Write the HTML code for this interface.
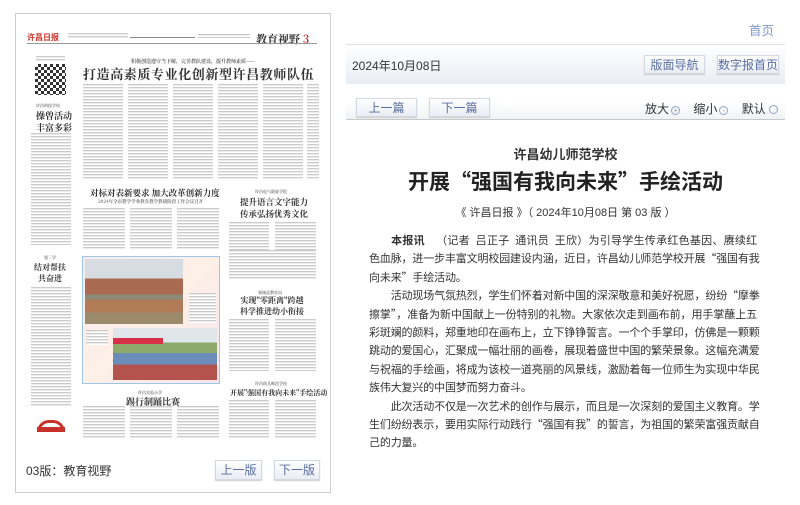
<!DOCTYPE html>
<html><head><meta charset="utf-8"><style>
*{margin:0;padding:0;box-sizing:border-box}
body{width:800px;height:505px;background:#fff;position:relative;overflow:hidden;font-family:"Liberation Sans","Noto Sans CJK SC",sans-serif;color:#333}
.a{position:absolute}
.t{background:repeating-linear-gradient(to bottom,#cbcbcb 0 1px,#ececec 1px 2px,#fff 2px 3px)}
.btn{position:absolute;border:1px solid #d3d8e2;background:linear-gradient(#fff,#e9edf4);box-shadow:0 1px 1px #ccc;font-size:12px;color:#5a6fa0;text-align:center;line-height:18px}
.np{font-family:"Noto Serif CJK SC","Noto Sans CJK SC",serif;font-weight:bold;color:#333;white-space:nowrap}
.ln{height:18.4px;line-height:18.4px;font-size:11px;letter-spacing:-0.15px;text-align:justify;text-align-last:justify;white-space:nowrap;color:#333;font-family:"Noto Sans CJK SC","Liberation Sans",sans-serif}
.ln.l{text-align-last:left}
</style></head><body>
<div class="a" style="left:15px;top:13px;width:316px;height:480px;border:1px solid #cfcfcf"></div>
<div class="a" style="left:27px;top:32px;font-size:8px;color:#c8312a;font-weight:bold">许昌日报</div>
<div class="a t" style="left:68px;top:33px;width:60px;height:6px"></div>
<div class="a" style="left:130px;top:37px;width:65px;height:1px;background:#888"></div>
<div class="a t" style="left:198px;top:34px;width:52px;height:4px"></div>
<div class="a np" style="left:256px;top:31px;font-size:11px">教育视野 <span style="color:#c8312a">3</span></div>
<div class="a" style="left:27px;top:43px;width:290px;height:1px;background:#999"></div>
<div class="a t" style="left:36px;top:56px;width:29px;height:5px"></div>
<div class="a" style="left:35px;top:64px;width:31px;height:31px;background:repeating-conic-gradient(#333 0 25%,#fff 0 50%) 0 0/6px 6px"></div>
<div class="a np" style="left:36px;top:103px;font-size:4px;color:#777">许昌科技学校</div>
<div class="a np" style="left:36px;top:110px;font-size:9px;line-height:12px">操曾活动<br>丰富多彩</div>
<div class="a t" style="left:31px;top:133px;width:40px;height:112px"></div>
<div class="a np" style="left:44px;top:255px;font-size:4px;color:#777">第三学</div>
<div class="a np" style="left:34px;top:262px;font-size:8px;line-height:11px;text-align:center">结对帮扶<br>共奋进</div>
<div class="a t" style="left:31px;top:287px;width:40px;height:120px"></div>
<div class="a" style="left:37px;top:420px;width:28px;height:12px;border:3px solid #c8312a;border-bottom:none;border-radius:14px 14px 0 0"></div>
<div class="a" style="left:37px;top:427px;width:28px;height:5px;background:#c8312a"></div>
<div class="a np" style="left:131px;top:58px;font-size:5px;color:#666">积极创造遵守当下解，完善教队建设，提升教师素质——</div>
<div class="a np" style="left:83px;top:64px;font-size:13px;letter-spacing:0.6px">打造高素质专业化创新型许昌教师队伍</div>
<div class="a t" style="left:83px;top:84px;width:40px;height:95px"></div>
<div class="a t" style="left:128px;top:84px;width:40px;height:95px"></div>
<div class="a t" style="left:173px;top:84px;width:40px;height:95px"></div>
<div class="a t" style="left:218px;top:84px;width:40px;height:95px"></div>
<div class="a t" style="left:263px;top:84px;width:40px;height:95px"></div>
<div class="a t" style="left:307px;top:84px;width:12px;height:95px"></div>
<div class="a np" style="left:90px;top:187px;font-size:8.5px">对标对表新要求 加大改革创新力度</div>
<div class="a np" style="left:98px;top:199px;font-size:4.5px;color:#777">2024年全市教学学业教育教学教研阶段工作会议召开</div>
<div class="a t" style="left:83px;top:208px;width:42px;height:42px"></div>
<div class="a t" style="left:130px;top:208px;width:42px;height:42px"></div>
<div class="a t" style="left:177px;top:208px;width:42px;height:42px"></div>
<div class="a np" style="left:255px;top:189px;font-size:4px;color:#777">许昌电气职业学院</div>
<div class="a np" style="left:240px;top:196px;font-size:8.5px;line-height:12px;text-align:center">提升语言文字能力<br>传承弘扬优秀文化</div>
<div class="a t" style="left:229px;top:222px;width:40px;height:58px"></div>
<div class="a t" style="left:275px;top:222px;width:41px;height:58px"></div>
<div class="a" style="left:82px;top:256px;width:138px;height:128px;border:1px solid #9cc7e6;background:linear-gradient(135deg,#fbe9ef,#fdf0e6 50%,#f6e4ef)"></div>
<div class="a" style="left:85px;top:259px;width:98px;height:65px;background:linear-gradient(#d6dce2 0 30%,#a86a50 30% 55%,#8c8a78 55% 62%,#b07b56 62% 82%,#9b8a6b 82%)"></div>
<div class="a t" style="left:189px;top:293px;width:27px;height:30px"></div>
<div class="a t" style="left:86px;top:330px;width:22px;height:15px"></div>
<div class="a" style="left:113px;top:328px;width:104px;height:52px;background:linear-gradient(#dfe6ea 0 28%,#8ea96c 28% 48%,#6c8dba 48% 70%,#b2534d 70%)"></div>
<div class="a" style="left:113px;top:338px;width:50px;height:6px;background:#d9304a"></div>
<div class="a np" style="left:138px;top:390px;font-size:4px;color:#777">许昌实验小学</div>
<div class="a np" style="left:126px;top:395px;font-size:9px">踢行制踊比赛</div>
<div class="a t" style="left:83px;top:406px;width:42px;height:32px"></div>
<div class="a t" style="left:130px;top:406px;width:42px;height:32px"></div>
<div class="a t" style="left:177px;top:406px;width:42px;height:32px"></div>
<div class="a t" style="left:229px;top:250px;width:87px;height:30px"></div>
<div class="a np" style="left:258px;top:290px;font-size:4px;color:#777">襄城县教育局</div>
<div class="a np" style="left:240px;top:295px;font-size:8px;line-height:11px;text-align:center">实现"零距离"跨越<br>科学推进幼小衔接</div>
<div class="a t" style="left:229px;top:319px;width:40px;height:52px"></div>
<div class="a t" style="left:275px;top:319px;width:41px;height:52px"></div>
<div class="a np" style="left:255px;top:381px;font-size:4px;color:#777">许昌幼儿师范学校</div>
<div class="a np" style="left:230px;top:388px;font-size:7px">开展"强国有我向未来"手绘活动</div>
<div class="a t" style="left:229px;top:400px;width:40px;height:38px"></div>
<div class="a t" style="left:275px;top:400px;width:41px;height:38px"></div>
<div class="a" style="left:26px;top:462px;font-size:12px;color:#333">03版：教育视野</div>
<div class="btn" style="left:215px;top:460px;width:47px;height:20px;font-size:12px">上一版</div>
<div class="btn" style="left:274px;top:460px;width:46px;height:20px;font-size:12px">下一版</div>
<div class="a" style="left:749px;top:20px;font-size:12.5px;color:#7f98c9">首页</div>
<div class="a" style="left:346px;top:44px;width:439px;height:40px;border-top:1px solid #e1e1e1;background:linear-gradient(#fff,#e9edf4)"></div>
<div class="a" style="left:352px;top:57px;font-size:12px;color:#333">2024年10月08日</div>
<div class="btn" style="left:644px;top:55px;width:61px;height:19px">版面导航</div>
<div class="btn" style="left:717px;top:55px;width:62px;height:19px">数字报首页</div>
<div class="a" style="left:346px;top:85px;width:439px;height:35px;border-bottom:1px solid #c8c8c8;background:linear-gradient(#fff 50%,#f0f2f5)"></div>
<div class="btn" style="left:356px;top:98px;width:61px;height:19px">上一篇</div>
<div class="btn" style="left:429px;top:98px;width:61px;height:19px">下一篇</div>
<div class="a" style="left:645px;top:100px;font-size:12px;color:#333;white-space:nowrap">放大<span style="display:inline-block;width:9px;height:9px;border:1px solid #8ea3cc;border-radius:50%;margin:0 0 -1px 2px;font-size:8px;line-height:7px;text-align:center;color:#8ea3cc">+</span>&nbsp;&nbsp;&nbsp;&nbsp;缩小<span style="display:inline-block;width:9px;height:9px;border:1px solid #8ea3cc;border-radius:50%;margin:0 0 -1px 2px;font-size:8px;line-height:7px;text-align:center;color:#8ea3cc">-</span>&nbsp;&nbsp;&nbsp;&nbsp;默认 <span style="display:inline-block;width:9px;height:9px;border:1px solid #8ea3cc;border-radius:50%;margin-bottom:-1px"></span></div>
<div class="a" style="left:346px;top:144px;width:439px;text-align:center;font-size:13px;font-weight:bold;color:#333">许昌幼儿师范学校</div>
<div class="a" style="left:346px;top:167px;width:439px;text-align:center;font-size:21px;font-weight:bold;color:#222;font-family:'Noto Sans CJK SC',sans-serif;line-height:28px">开展“强国有我向未来”手绘活动</div>
<div class="a" style="left:346px;top:204px;width:439px;text-align:center;font-size:11px;color:#333">《 许昌日报 》（ 2024年10月08日 第 03 版 ）</div>
<div class="a" style="left:369px;top:231px;width:388px">
<div class="ln">&emsp;&emsp;<b>本报讯</b>&emsp;（记者&ensp;吕正子&ensp;通讯员&ensp;王欣）为引导学生传承红色基因、赓续红</div>
<div class="ln">色血脉，进一步丰富文明校园建设内涵，近日，许昌幼儿师范学校开展“强国有我</div>
<div class="ln l">向未来”手绘活动。</div>
<div class="ln">&emsp;&emsp;活动现场气氛热烈，学生们怀着对新中国的深深敬意和美好祝愿，纷纷“摩拳</div>
<div class="ln">擦掌”，准备为新中国献上一份特别的礼物。大家依次走到画布前，用手掌蘸上五</div>
<div class="ln">彩斑斓的颜料，郑重地印在画布上，立下铮铮誓言。一个个手掌印，仿佛是一颗颗</div>
<div class="ln">跳动的爱国心，汇聚成一幅壮丽的画卷，展现着盛世中国的繁荣景象。这幅充满爱</div>
<div class="ln">与祝福的手绘画，将成为该校一道亮丽的风景线，激励着每一位师生为实现中华民</div>
<div class="ln l">族伟大复兴的中国梦而努力奋斗。</div>
<div class="ln">&emsp;&emsp;此次活动不仅是一次艺术的创作与展示，而且是一次深刻的爱国主义教育。学</div>
<div class="ln">生们纷纷表示，要用实际行动践行“强国有我”的誓言，为祖国的繁荣富强贡献自</div>
<div class="ln l">己的力量。</div>
</div>
</body></html>
